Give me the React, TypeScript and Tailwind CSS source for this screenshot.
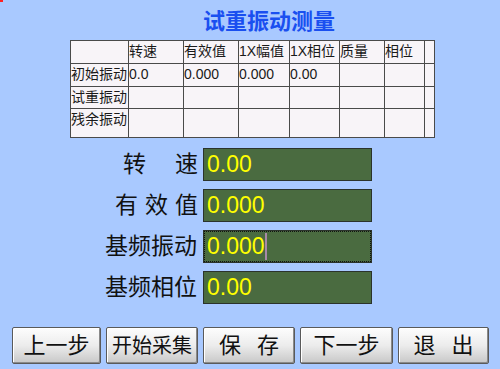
import React from 'react';

const cjk = "font-['Liberation_Sans','Noto_Sans_CJK_SC',sans-serif]";

const colWidths = [58, 55, 55, 51, 50, 45, 40, 10];
const header = ['', '转速', '有效值', '1X幅值', '1X相位', '质量', '相位', ''];
const rows = [
  { h: 23, cells: ['初始振动', '0.0', '0.000', '0.000', '0.00', '', '', ''] },
  { h: 22, cells: ['试重振动', '', '', '', '', '', '', ''] },
  { h: 29, cells: ['残余振动', '', '', '', '', '', '', ''] },
];

const fields = [
  { chars: ['转', '速'], w: 75, value: '0.00', focused: false },
  { chars: ['有', '效', '值'], w: 83, value: '0.000', focused: false },
  { chars: ['基频振动'], w: 93, value: '0.000', focused: true },
  { chars: ['基频相位'], w: 93, value: '0.00', focused: false },
];

const buttons = [
  { chars: ['上一步'], w: 89, size: 'text-[22px]' },
  { chars: ['开始采集'], w: 92, size: 'text-[20px]' },
  { chars: ['保', '存'], w: 92, size: 'text-[22px]' },
  { chars: ['下一步'], w: 93, size: 'text-[22px]' },
  { chars: ['退', '出'], w: 91, size: 'text-[22px]' },
];

const App: React.FC = () => {
  return (
    <div className={`relative w-[500px] h-[369px] bg-[#a9c9ff] overflow-hidden flex flex-col ${cjk}`}>
      {/* red corner mark */}
      <div className="absolute left-0 top-0 w-[3px] h-[2px] bg-[#ff2020]" />

      <h1 className="pl-[203px] pt-[9px] h-[40px] text-[22px] leading-[26px] font-bold text-[#1a4ff0]">
        试重振动测量
      </h1>

      {/* data table */}
      <table className="ml-[70px] w-[364px] border-collapse table-fixed bg-[#f8f4f8] text-[14px] text-[#1a1a1a]">
        <colgroup>
          {colWidths.map((w, i) => (
            <col key={i} style={{ width: w }} />
          ))}
        </colgroup>
        <tbody>
          <tr className="h-[23px]">
            {header.map((t, i) => (
              <td key={i} className="border border-[#4a4a4a] p-0 pt-[1px] align-top leading-[18px] whitespace-nowrap overflow-hidden">
                {t}
              </td>
            ))}
          </tr>
          {rows.map((r, ri) => (
            <tr key={ri} style={{ height: r.h }}>
              {r.cells.map((t, i) => (
                <td key={i} className="border border-[#4a4a4a] p-0 pt-[1px] align-top leading-[18px] whitespace-nowrap overflow-hidden">
                  {t}
                </td>
              ))}
            </tr>
          ))}
        </tbody>
      </table>

      {/* form fields */}
      <div className="mt-[10px] flex flex-col gap-[8px]">
        {fields.map((f) => (
          <div key={f.chars.join('')} className="flex items-center h-[33px]">
            <div className="w-[198px] flex justify-end">
              <div style={{ width: f.w }} className="flex justify-between text-[23px] leading-none text-[#111]">
                {f.chars.map((c) => (
                  <span key={c}>{c}</span>
                ))}
              </div>
            </div>
            <div className="ml-[5px] w-[169px] h-[33px] bg-[#4a6b40] border border-[#2b332b] flex items-center relative">
              {f.focused && (
                <div className="absolute inset-0 border border-dotted border-[#111]" />
              )}
              <span className="pl-[3px] text-[23px] leading-none text-[#ffff00] font-['Liberation_Sans',sans-serif]">
                {f.value}
              </span>
              {f.focused && <span className="w-[2px] h-[27px] bg-[#a889a8]" />}
            </div>
          </div>
        ))}
      </div>

      {/* buttons */}
      <div className="mt-auto mb-[5px] ml-[12px] flex gap-[5px]">
        {buttons.map((b) => (
          <button
            key={b.chars.join('')}
            style={{ width: b.w }}
            className={`h-[37px] flex items-center justify-center gap-[16px] rounded-[2px] border border-[#5a5a5a] bg-gradient-to-b from-[#fdfdfd] via-[#ececec] to-[#c8c8c8] shadow-[inset_-1px_-1px_0_#8a8a8a,inset_1px_1px_0_#ffffff] text-[#111] ${b.size}`}
          >
            {b.chars.map((c) => (
              <span key={c}>{c}</span>
            ))}
          </button>
        ))}
      </div>
    </div>
  );
};

export default App;
